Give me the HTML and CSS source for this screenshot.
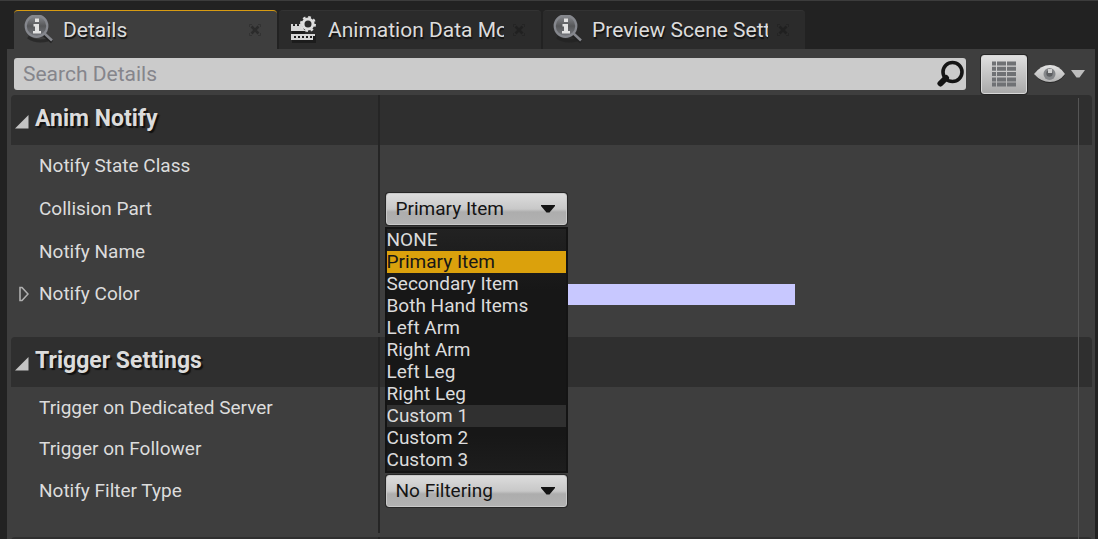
FILE: index.html
```html
<!DOCTYPE html>
<html lang="en">
<head>
<meta charset="utf-8">
<title>Details</title>
<link rel="stylesheet" href="styles.css">
</head>
<body>
<svg class="defs" aria-hidden="true">
  <defs>
    <linearGradient id="lens" x1="0" y1="0" x2="0" y2="1">
      <stop offset="0" stop-color="#8b8d92"/><stop offset="0.5" stop-color="#565759"/><stop offset="1" stop-color="#77797f"/>
    </linearGradient>
    <linearGradient id="lid" x1="0" y1="0" x2="0" y2="1">
      <stop offset="0" stop-color="#e4e4e4"/><stop offset="1" stop-color="#b2b2b2"/>
    </linearGradient>
    <symbol id="info" viewBox="0 0 30 30">
      <path d="M4 22q8 6 20 3" fill="none" stroke="#222" stroke-width="3" opacity=".7"/>
      <path d="M20 20l8 7" stroke="#222" stroke-width="3"/>
      <path d="M20 18l8 7.500" stroke="#85878d" stroke-width="2.400"/>
      <circle cx="12.500" cy="11" r="10.800" fill="url(#lens)" stroke="#85878d" stroke-width="2.200"/>
      <path d="M11 3.500h4v3.500h-4zM9.500 9h5.500v7h2v2.500H9V16h2v-4.500H9.500z" fill="#e2e2e2"/>
    </symbol>
    <symbol id="close" viewBox="0 0 12 12">
      <path d="M2.500 2.500l7 7M9.500 2.500l-7 7" stroke="currentColor" stroke-width="2.600"/>
      <path d="M.5 3V.5H3M9 .5h2.500V3M11.500 9v2.500H9M3 11.500H.5V9" fill="none" stroke="currentColor" opacity=".6"/>
    </symbol>
  </defs>
</svg>
<main class="window">
  <div class="tabs" role="tablist">
    <div class="tab tab-active" role="tab" aria-selected="true">
      <svg class="tab-icon"><use href="#info"/></svg>
      <span class="tab-label">Details</span>
      <button class="tab-close" aria-label="Close Details"><svg><use href="#close"/></svg></button>
    </div>
    <div class="tab" role="tab" aria-selected="false">
      <svg class="tab-icon" viewBox="0 0 30 30">
        <g fill="#161616" opacity=".7"><rect x="3" y="10" width="13" height="9"/><rect x="3" y="20" width="24" height="8"/></g>
        <path d="M2 9h2v2h2V9h2v2h2V9h3q0 5 4 7H2z" fill="#d6d6d6"/>
        <path d="M2 19h24v2H2zM2 21h3v2h2v-2h2v2h2v-2h2v2h2v-2h2v2h2v-2h2v2h2v-2h1v4H2z" fill="#d6d6d6"/>
        <circle cx="19" cy="9" r="5" fill="none" stroke="#dedede" stroke-width="3"/>
        <circle cx="19" cy="9" r="7" fill="none" stroke="#dedede" stroke-width="2" stroke-dasharray="2.750 2.750"/>
      </svg>
      <span class="tab-label">Animation Data Model</span>
      <button class="tab-close" aria-label="Close Animation Data Model"><svg><use href="#close"/></svg></button>
    </div>
    <div class="tab" role="tab" aria-selected="false">
      <svg class="tab-icon"><use href="#info"/></svg>
      <span class="tab-label">Preview Scene Settings</span>
      <button class="tab-close" aria-label="Close Preview Scene Settings"><svg><use href="#close"/></svg></button>
    </div>
  </div>

  <div class="panel">
    <div class="toolbar">
      <label class="search">
        <input class="search-input" type="text" placeholder="Search Details" aria-label="Search Details">
        <svg class="search-icon" viewBox="0 0 28 28">
          <path d="M9 18l-5.500 5.500" stroke="#151515" stroke-width="6" stroke-linecap="round"/>
          <circle cx="15.500" cy="12" r="9.500" fill="none" stroke="#151515" stroke-width="3.600"/>
        </svg>
      </label>
      <button class="grid-button" aria-label="Property matrix">
        <svg viewBox="0 0 24 26" width="24" height="26">
          <g stroke="#6f7174" stroke-width="4">
            <path d="M0 2.500h24M0 7.800h24M0 13.100h24M0 18.400h24M0 23.500h24" stroke-dasharray="4 1 9 1 9"/>
          </g>
        </svg>
      </button>
      <button class="view-button" aria-label="View options">
        <svg viewBox="0 0 32 20" width="32" height="20">
          <path d="M1 11Q7 2 16 2T31 11Q25 19 16 19T1 11z" fill="#292929"/>
          <path d="M0 10Q7 1 16 1T31 10Q25 18 16 18T0 10z" fill="url(#lid)"/>
          <circle cx="15.500" cy="10" r="6" fill="#85878a"/>
          <circle cx="15.500" cy="9.500" r="3.200" fill="#5c5e61"/>
          <path d="M14 5h4v4h-4z" fill="#d2d2d2"/>
        </svg>
        <svg viewBox="0 0 14 8" width="14" height="8"><path d="M0 0h14L8.500 7.500h-3z" fill="#bdbdbd"/></svg>
      </button>
    </div>

    <div class="details">
      <section class="category">
        <h2 class="category-header">
          <svg class="expander" viewBox="0 0 14 14"><path d="M13.500 0v13.500H0z" fill="#c4c4c4"/></svg>
          <span>Anim Notify</span>
        </h2>
        <div class="rows">
          <div class="row"><span class="name">Notify State Class</span></div>
          <div class="row row-combo">
            <label class="name" for="part">Collision Part</label>
            <div class="value">
              <div class="combo">
                <select id="part" class="combo-select"><option>Primary Item</option></select>
                <svg class="combo-arrow" viewBox="0 0 14 8"><path d="M0 0h14v1L8.500 7.500h-3L0 1z" fill="#141414"/></svg>
                <ul class="menu" role="listbox" aria-label="Collision Part">
                  <li class="item" role="option">NONE</li>
                  <li class="item item-selected" role="option" aria-selected="true">Primary Item</li>
                  <li class="item" role="option">Secondary Item</li>
                  <li class="item" role="option">Both Hand Items</li>
                  <li class="item" role="option">Left Arm</li>
                  <li class="item" role="option">Right Arm</li>
                  <li class="item" role="option">Left Leg</li>
                  <li class="item" role="option">Right Leg</li>
                  <li class="item item-hover" role="option">Custom 1</li>
                  <li class="item" role="option">Custom 2</li>
                  <li class="item" role="option">Custom 3</li>
                </ul>
              </div>
            </div>
          </div>
          <div class="row"><span class="name">Notify Name</span></div>
          <div class="row">
            <span class="name name-expandable">
              <svg class="child-arrow" viewBox="0 0 10 16"><path d="M1 1.500h2l6 6.500-6 6.500H1z" fill="none" stroke="#b0b0b0" stroke-width="1.600"/></svg>
              Notify Color
            </span>
            <div class="value"><button class="swatch" aria-label="Notify Color"></button></div>
          </div>
        </div>
      </section>

      <section class="category">
        <h2 class="category-header">
          <svg class="expander" viewBox="0 0 14 14"><path d="M13.500 0v13.500H0z" fill="#c4c4c4"/></svg>
          <span>Trigger Settings</span>
        </h2>
        <div class="rows rows-last">
          <div class="row row-compact"><span class="name">Trigger on Dedicated Server</span></div>
          <div class="row row-compact"><span class="name">Trigger on Follower</span></div>
          <div class="row row-combo">
            <label class="name" for="filter">Notify Filter Type</label>
            <div class="value">
              <div class="combo">
                <select id="filter" class="combo-select"><option>No Filtering</option></select>
                <svg class="combo-arrow" viewBox="0 0 14 8"><path d="M0 0h14v1L8.500 7.500h-3L0 1z" fill="#141414"/></svg>
              </div>
            </div>
          </div>
        </div>
      </section>
      <section class="category"><div class="category-header"></div></section>
      <div class="scroll-edge"></div>
    </div>
  </div>
</main>
</body>
</html>
```

FILE: styles.css
```css
* { box-sizing: border-box; }

body {
  margin: 0;
  background: #222;
  color: #dcdcdc;
  font: 19px/22px Roboto, "Liberation Sans", sans-serif;
}

button, input, select { font: inherit; border: 0; padding: 0; margin: 0; }
button { background: none; }
.defs { position: absolute; width: 0; height: 0; }

.window {
  height: 100vh;
  display: flex;
  flex-direction: column;
  overflow: hidden;
  border-top: 1px solid #3c3c3c;
  padding: 9px 3px 0 7px;
}

/* Tabs */
.tabs { display: flex; gap: 2px; padding-left: 7px; }

.tab {
  flex: 0 1 262px;
  min-width: 0;
  height: 39px;
  display: flex;
  align-items: center;
  padding: 0 16px 0 10px;
  background: #2b2b2b;
  border-top: 1px solid #333;
  border-radius: 4px 4px 0 0;
  font-size: 21px;
  line-height: 28px;
  text-shadow: 1px 2px 1px #111;
}
.tab-active {
  flex-basis: 263px;
  background: #3e3e3e;
  border-top-color: #d79b12;
}
.tab-icon { flex: none; width: 30px; height: 30px; margin-right: 9px; }
.tab-label { flex: 1; min-width: 0; overflow: hidden; white-space: nowrap; }
.tab-close { flex: none; display: flex; margin-left: 9px; color: #202020; }
.tab-active .tab-close { color: #2b2b2b; }
.tab-close svg { width: 12px; height: 12px; }

/* Panel */
.panel {
  flex: 1;
  min-height: 0;
  display: flex;
  flex-direction: column;
  background: #3e3e3e;
}

.toolbar {
  flex: none;
  height: 46px;
  display: flex;
  align-items: center;
  padding: 4px 10px 0 7px;
}
.search {
  flex: 1;
  display: flex;
  align-items: center;
  height: 32px;
  padding: 0 1px 0 9px;
  background: #cbcbcb;
  border-radius: 3px;
}
.search-input {
  flex: 1;
  min-width: 0;
  background: none;
  outline: 0;
  color: #222;
  font-size: 21px;
  line-height: 28px;
}
.search-input::placeholder { color: #85858b; opacity: 1; }
.search-icon { flex: none; width: 28px; height: 28px; }

.grid-button {
  display: flex;
  align-items: center;
  justify-content: center;
  width: 46px;
  height: 39px;
  margin: 0 7px 0 15px;
  background: linear-gradient(#dfdfdf, #a9a9a9);
  border: 1px solid #d8d8d8;
  border-radius: 3px;
  box-shadow: 0 0 0 1px #262626;
}
.view-button { display: flex; align-items: center; gap: 5px; }

/* Property list */
.details { position: relative; flex: 1; min-height: 0; overflow: hidden; padding: 0 3px 0 4px; }

.category-header {
  display: flex;
  align-items: center;
  gap: 6px;
  height: 50px;
  margin: 0;
  padding: 0 0 2px 4px;
  background: linear-gradient(#252525, #252525) 34% 0 / 2px 100% no-repeat #2f2f2f;
  border-radius: 4px 4px 0 0;
  font-size: 23px;
  line-height: 28px;
  font-weight: 700;
  text-shadow: 2px 2px 1px #111;
}
.expander { width: 14px; height: 14px; margin-top: 5px; }

.rows {
  margin-bottom: 4px;
  padding-bottom: 18px;
  background: linear-gradient(#252525, #252525) 34% 0 / 2px 100% no-repeat;
}
.rows-last { padding-bottom: 20px; }
.row {
  display: grid;
  grid-template-columns: 34% 1fr;
  align-items: center;
  min-height: 42px;
}
.row-compact { min-height: 41px; }
.row-combo { min-height: 44px; }
.name { padding-left: 28px; }
.name-expandable { display: flex; align-items: center; gap: 10px; padding-left: 8px; }
.child-arrow { width: 10px; height: 16px; }
.value { padding: 0 16px 0 7px; }

.swatch { display: block; width: 100%; max-width: 409px; height: 21px; background: #c8c8ff; }

.combo { position: relative; width: 181px; }
.combo-select {
  appearance: none;
  display: block;
  width: 100%;
  height: 32px;
  padding: 0 32px 0 9px;
  color: #141414;
  background: linear-gradient(#dcdcdc, #c8c8c8 50%, #adadad 60%, #b2b2b2);
  border: 1px solid #c9c9c9;
  border-radius: 3px;
  box-shadow: 0 0 0 1px #262626;
}
.combo-arrow {
  position: absolute;
  top: 12px;
  right: 12px;
  width: 14px;
  height: 8px;
  pointer-events: none;
}

.menu {
  position: absolute;
  z-index: 2;
  top: 34px;
  left: -1px;
  right: -1px;
  margin: 0;
  padding: 0;
  list-style: none;
  background: linear-gradient(#222, #171717 25%, #171717 85%, #1d1d1d);
  border: 2px solid #141414;
}
.item { white-space: nowrap; }
.item-selected { background: #dba10c; color: #171717; }
.item-hover { background: #303030; }

.scroll-edge {
  position: absolute;
  top: 3px;
  bottom: 0;
  right: 16px;
  width: 1px;
  background: #555;
}
```
